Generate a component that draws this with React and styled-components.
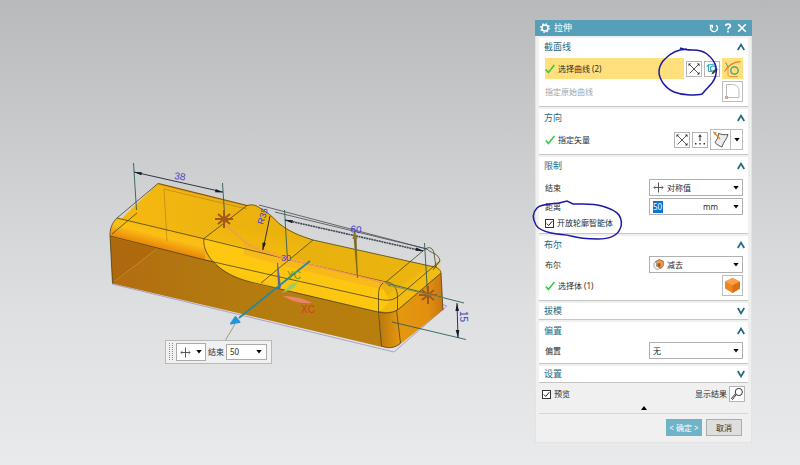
import React from "react";
import styled, { createGlobalStyle } from "styled-components";

const GlobalStyle = createGlobalStyle`
  *, *::before, *::after {
    box-sizing: border-box;
  }
  body {
    margin: 0;
    font-family: "Noto Sans", "Noto Sans CJK SC", sans-serif;
    font-size: 8px;
    line-height: 12px;
    color: #2b2b2b;
  }
  button, input, select {
    font: inherit;
    color: inherit;
    margin: 0;
    padding: 0;
    border-radius: 0;
  }
  svg {
    display: block;
  }
`;

const App = () => {
  return (
    <Desktop>
      <GlobalStyle />
      <Model />
      <QuickBar />
      <ExtrudeDialog />
    </Desktop>
  );
};

const ExtrudeDialog = () => {
  return (
    <Dialog aria-label="拉伸">
      <TitleBar>
        <GearIcon />
        <Title>拉伸</Title>
        <TitleButton aria-label="重置">
          <svg width="10" height="10" viewBox="0 0 10 10" fill="none" stroke="#fff" strokeWidth="1.4">
            <path d="M2.400 2.800A3.500 3.500 0 1 0 7.200 2.400" />
            <path d="M.6 2.400h2.800v2.800" strokeWidth="1.2" />
          </svg>
        </TitleButton>
        <TitleButton aria-label="帮助">
          <svg width="10" height="10" viewBox="0 0 10 10" fill="none" stroke="#fff" strokeWidth="1.7">
            <path d="M2.600 2.900C2.800.4 7.400.4 7.400 2.900 7.400 4.500 5 4.400 5 6.600M5 7.800v1.700" />
          </svg>
        </TitleButton>
        <TitleButton aria-label="关闭">
          <svg width="10" height="10" viewBox="0 0 10 10" stroke="#fff" strokeWidth="1.6">
            <path d="M1.200 1.200l7.600 7.600M8.800 1.200L1.200 8.800" />
          </svg>
        </TitleButton>
      </TitleBar>

      <Sections>
        <Section title="截面线">
          <Row>
            <Highlight>
              <CheckIcon />
              选择曲线 (2)
            </Highlight>
            <ToolButton aria-label="反向">
              <ReverseIcon />
            </ToolButton>
            <ToolButton aria-label="绘制截面">
              <SketchIcon />
            </ToolButton>
            <LargeButton $active aria-label="曲线">
              <CurveIcon />
            </LargeButton>
          </Row>
          <Row>
            <Label $muted>指定原始曲线</Label>
            <LargeButton aria-label="指定原始曲线" disabled>
              <OriginIcon />
            </LargeButton>
          </Row>
        </Section>

        <Section title="方向">
          <Row>
            <Label>
              <CheckIcon />
              指定矢量
            </Label>
            <ToolButton aria-label="反向">
              <ReverseIcon />
            </ToolButton>
            <ToolButton aria-label="矢量对话框">
              <svg width="14" height="14" viewBox="0 0 14 14" fill="#333">
                <path d="M6.500 3h1v5h-1zM7 1.200l1.800 2.600H5.200zM2 10h1.500v1.500H2zM6.250 10h1.500v1.500h-1.500zM10.500 10H12v1.500h-1.500z" />
              </svg>
            </ToolButton>
            <SplitButton>
              <LargeButton aria-label="面法向">
                <SurfaceIcon />
              </LargeButton>
              <DropButton aria-label="更多矢量">
                <Caret />
              </DropButton>
            </SplitButton>
          </Row>
        </Section>

        <Section title="限制" roomy>
          <Row>
            <Label as="label" htmlFor="limit-end">
              结束
            </Label>
            <SelectField id="limit-end" value="对称值" icon={<SymmetricIcon />} />
          </Row>
          <Row>
            <Label as="label" htmlFor="distance">
              距离
            </Label>
            <Field>
              <DistanceInput id="distance" defaultValue="50" />
              <Unit>mm</Unit>
              <Caret />
            </Field>
          </Row>
          <Row>
            <Checkbox label="开放轮廓智能体" />
          </Row>
        </Section>

        <Section title="布尔">
          <Row>
            <Label as="label" htmlFor="boolean">
              布尔
            </Label>
            <SelectField id="boolean" value="减去" icon={<SubtractIcon />} />
          </Row>
          <Row>
            <Label>
              <CheckIcon />
              选择体 (1)
            </Label>
            <LargeButton aria-label="选择体">
              <CubeIcon />
            </LargeButton>
          </Row>
        </Section>

        <Section title="拔模" collapsed />

        <Section title="偏置">
          <Row>
            <Label as="label" htmlFor="offset">
              偏置
            </Label>
            <SelectField id="offset" value="无" />
          </Row>
        </Section>

        <Section title="设置" collapsed />
      </Sections>

      <Preview>
        <Checkbox label="预览" />
        <PreviewResult>
          显示结果
          <ToolButton aria-label="显示结果">
            <svg width="14" height="14" viewBox="0 0 14 14" fill="none" stroke="#333">
              <circle cx="8.8" cy="5" r="3.6" />
              <path d="M6.200 7.600L2.600 12.400 1.400 11.400 5.400 6.800" />
            </svg>
          </ToolButton>
        </PreviewResult>
      </Preview>
      <LessButton aria-label="收起">
        <svg width="6" height="4" viewBox="0 0 6 4">
          <path d="M0 4l3-4 3 4z" />
        </svg>
      </LessButton>
      <Actions>
        <ActionButton $primary>&lt; 确定 &gt;</ActionButton>
        <ActionButton>取消</ActionButton>
      </Actions>

      <PenMarks viewBox="0 0 217 423" aria-hidden="true">
        <path d="M152 29l-7 1c-8 2-12 6-17 11-3 4-4 8-4 11 0 4 2 8 4 11 3 4 6 7 11 9 5 2 10 3 16 3 5 0 9 0 12-1l10-11c3-4 5-10 4-16-1-5-3-8-9-13-4-3-9-4-14-4-5 0-9 0-13-2" />
        <path d="M1 205c-4-7-4-12 1-17 4-4 15-4 22-5l8-2 6 3c10 0 20-1 29 2 7 2 14 5 17 9 3 5 3 10 1 14-3 7-12 10-22 10-9 0-20-1-27-3-6-2-12-1-20-3C8 211 3 209 1 205z" />
      </PenMarks>
    </Dialog>
  );
};

const Section = ({ title, collapsed, roomy, children }) => {
  const [open, setOpen] = React.useState(!collapsed);

  return (
    <Panel>
      <PanelHeader
        $open={open}
        aria-expanded={open}
        onClick={() => setOpen((o) => !o)}
      >
        {title}
        <svg width="8" height="8" viewBox="0 0 8 8" fill="none" stroke="#1d687f" strokeWidth="1.7">
          <path d={open ? "M.8 7L4 1.600 7.200 7" : "M.8 1L4 6.400 7.200 1"} />
        </svg>
      </PanelHeader>
      {open && <PanelBody $roomy={roomy}>{children}</PanelBody>}
    </Panel>
  );
};

const SelectField = ({ id, value, icon }) => (
  <Field>
    {icon}
    <Select id={id} defaultValue={value}>
      <option>{value}</option>
    </Select>
    <Caret />
  </Field>
);

const Checkbox = ({ label }) => (
  <CheckLabel>
    <CheckBoxWrap>
      <CheckInput type="checkbox" defaultChecked />
      <svg width="9" height="9" viewBox="0 0 9 9" fill="none" stroke="#222">
        <path d="M1.800 4.600l1.900 1.900 3.600-4.300" />
      </svg>
    </CheckBoxWrap>
    {label}
  </CheckLabel>
);

const QuickBar = () => (
  <Toolbar>
    <svg width="6" height="18" viewBox="0 0 6 18" stroke="#8c8c8c" strokeDasharray="1 1">
      <path d="M1.500 0v18M4.500 0v18" />
    </svg>
    <QuickMode aria-label="对称值">
      <SymmetricIcon />
      <Caret />
    </QuickMode>
    <label htmlFor="quick-end">结束</label>
    <QuickField>
      <QuickInput id="quick-end" defaultValue="50" />
      <Caret />
    </QuickField>
  </Toolbar>
);

const Caret = () => (
  <CaretSvg width="6" height="4" viewBox="0 0 6 4">
    <path d="M.3 0h5.400L3 3.400z" />
  </CaretSvg>
);

const CheckIcon = () => (
  <svg width="10" height="10" viewBox="0 0 10 10" fill="none" stroke="#35c948" strokeWidth="1.6">
    <path d="M.8 5.400l2.600 3L9.400 1" />
  </svg>
);

const GearIcon = () => (
  <svg width="10" height="10" viewBox="0 0 10 10" fill="none" stroke="#fff">
    <circle cx="5" cy="5" r="3" strokeWidth="1.4" />
    <circle cx="5" cy="5" r="4.2" strokeWidth="1.4" strokeDasharray="1.6 1.7" />
  </svg>
);

const ReverseIcon = () => (
  <svg width="14" height="14" viewBox="0 0 14 14" fill="none" stroke="#444" strokeWidth=".9">
    <path d="M2.500 2.500l9 9M2.500 11.500l9-9" />
    <path d="M1.500 1.500h2.700L1.500 4.200zM12.500 1.500v2.700L9.800 1.500zM12.500 12.500H9.800l2.700-2.700z" fill="#333" stroke="none" />
  </svg>
);

const SketchIcon = () => (
  <svg width="14" height="14" viewBox="0 0 14 14" fill="none" stroke="#35a8bc">
    <path d="M3.500 2v7.500M1.500 4.500C4 2.500 7 2 10.500 2M3.500 9.500H7" strokeWidth="1.2" />
    <circle cx="8" cy="6.500" r="2.600" strokeWidth="1.200" />
    <path d="M6.500 12.500l.8-2.500 4-4 1.500 1.500-4 4z" fill="#444" stroke="none" />
  </svg>
);

const CurveIcon = () => (
  <svg width="19" height="19" viewBox="0 0 19 19" fill="none">
    <path d="M5 8.500V16a1.500 1.500 0 0 0 1.500 1.500H15" stroke="#e59a3c" />
    <path d="M1.500 12.500C5 6.400 9.600 3 17.500 2.600" stroke="#e3862c" strokeWidth="1.3" />
    <path d="M2.500 3.500l3 5" stroke="#4a9c7a" />
    <circle cx="11.500" cy="11.500" r="3.700" stroke="#2aa091" strokeWidth="1.3" />
  </svg>
);

const OriginIcon = () => (
  <svg width="19" height="19" viewBox="0 0 19 19" fill="none">
    <path d="M3.500 15.500v-13h6c4 0 6.500 2.500 6.500 6.500v6.500z" stroke="#b9bcbe" />
    <path d="M2 14h3v3H2z" fill="#d3a595" />
  </svg>
);

const SurfaceIcon = () => (
  <svg width="19" height="19" viewBox="0 0 19 19" fill="none">
    <path d="M7.500 3.500c3 1 5.500 1.500 9.500 1-1 4.500-4.500 7-6 12.500-2-.5-4.500-2-7-4.500 1.500-2.500 3.500-4.500 3.500-9z" fill="#ececec" stroke="#555" />
    <path d="M9 9L3.500 3" stroke="#e8882f" strokeWidth="1.4" />
    <path d="M2 1.500l3.600.9-2.400 2.500z" fill="#e8882f" />
  </svg>
);

const SymmetricIcon = () => (
  <svg width="11" height="11" viewBox="0 0 11 11" fill="none" stroke="#555">
    <path d="M5.500.5v10M.8 5.500h9.400" />
    <path d="M2.400 4L.8 5.500 2.400 7M8.600 4l1.600 1.500L8.600 7" strokeWidth=".8" />
  </svg>
);

const SubtractIcon = () => (
  <svg width="11" height="11" viewBox="0 0 11 11">
    <path d="M2.500 2.500L6 .6l4.300 1.600v4.500L8 9.500 3 7z" fill="#ef9a55" stroke="#9c5a26" strokeWidth=".8" />
    <path d="M.8 5.500c0-1.500 1-2.300 2.700-2.300v4L6.800 9c-.8 1.200-2 1.500-3.300 1.200C1.600 9.700.8 8 .8 5.500z" fill="#f6f3ef" stroke="#888" strokeWidth=".7" />
    <path d="M4.500 4.500l3-.5v4.300l-3-1.300z" fill="#a3561f" />
  </svg>
);

const CubeIcon = () => (
  <svg width="19" height="19" viewBox="0 0 19 19">
    <path d="M9.500 2L17 5.600v7L9.500 17 2 12.600v-7z" fill="#ef8424" />
    <path d="M9.500 2L17 5.600 9.500 9.500 2 5.600z" fill="#fca147" />
    <path d="M9.500 9.500L17 5.600v7L9.500 17z" fill="#dc6f14" />
  </svg>
);

const Star = ({ x, y }) => (
  <path
    d={`M${x - 9} ${y}h18M${x} ${y - 9}v18M${x - 6} ${y - 5}l12 10M${x + 6} ${y - 5}l-12 10`}
    stroke="#a05a1c"
    strokeWidth="2"
  />
);

// Block with its sketch dimensions, in canvas units
const Model = () => (
  <ModelSvg width="380" height="205" viewBox="100 155 380 205" fill="none">
    <defs>
      <linearGradient id="top" x1="0" y1="0" x2="1" y2="0">
        <stop offset="0" stopColor="#f6b910" />
        <stop offset=".5" stopColor="#e8b00e" />
        <stop offset="1" stopColor="#edb50f" />
      </linearGradient>
      <linearGradient id="round" x1="155" y1="224" x2="149" y2="248" gradientUnits="userSpaceOnUse">
        <stop offset="0" stopColor="#f5b90f" />
        <stop offset=".4" stopColor="#fcc015" />
        <stop offset=".85" stopColor="#ec8d0b" />
        <stop offset="1" stopColor="#cc7b0b" />
      </linearGradient>
      <linearGradient id="front" x1="110" y1="0" x2="400" y2="0" gradientUnits="userSpaceOnUse">
        <stop offset="0" stopColor="#b26d10" />
        <stop offset=".4" stopColor="#b37a10" />
        <stop offset="1" stopColor="#b9800e" />
      </linearGradient>
      <linearGradient id="side" x1="395" y1="0" x2="442" y2="0" gradientUnits="userSpaceOnUse">
        <stop offset="0" stopColor="#e4990f" />
        <stop offset=".7" stopColor="#e2900f" />
        <stop offset="1" stopColor="#c97812" />
      </linearGradient>
      <linearGradient id="corner" x1="379" y1="0" x2="400" y2="0" gradientUnits="userSpaceOnUse">
        <stop offset="0" stopColor="#b9780d" />
        <stop offset="1" stopColor="#e7980c" />
      </linearGradient>
      <linearGradient id="bend" x1="230" y1="225" x2="222" y2="268" gradientUnits="userSpaceOnUse">
        <stop offset="0" stopColor="#ecb30e" />
        <stop offset="1" stopColor="#ffcb14" />
      </linearGradient>
    </defs>

    <path d="M112 284L394 352l53-46-6-2" stroke="#a9a2c4" />
    <path d="M110 235l95 18 80 35 94 24 3 35L112.500 283.500z" fill="url(#front)" />
    <path d="M110 236l2.500 47.500L167 241z" fill="#a9620c" opacity=".45" />
    <path d="M115 281l52-40" stroke="#cf9d4e" opacity=".6" />
    <path
      d="M158 183.500l89 22c5-1 8-1 12 2 9 5 12 8 20 16 10 8 20 12 34 16.500l123 27.300c4 2 5 4 5 6l-41 35c-7 5-13 6-22 3.700l-98-23.500-70-28-95-23c0-8 1-13 7-19.500z"
      fill="url(#top)"
    />
    <path d="M117 218l88 21v21l-95-23c0-8 2-14 7-19z" fill="url(#round)" />
    <path d="M204 238l43-33c6-1 9 0 12 2 9 5 12 8 20 16 10 8 20 12 34 16.500l-52 44c-24-5-42-14-50-24-5-7-8-14-7-21.500z" fill="url(#bend)" opacity=".75" />
    <path d="M204 238l91 21 84 23 11 19-10 11-99-23c-32-5-54-13-65-25-8-9-12-16-12-26z" fill="#ffc912" opacity=".85" />
    <path d="M244 241l51 18 91 23-1 8-105-25-36-10z" fill="#efa829" opacity=".4" />
    <path d="M380 300l60-40 1 13-41 35c-7 5-14 6-21 3.700z" fill="#ffc912" opacity=".35" />
    <path d="M398 309l43-36 2 37-45 36z" fill="url(#side)" />
    <path d="M379 311c7 2 13 1 19-2l2.500 34c-5 6-13 5-19 3.500z" fill="url(#corner)" />
    <path d="M159 184l88 22" stroke="#ef9e16" strokeWidth="2" />

    <g stroke="#4d4218" strokeWidth=".8">
      <path d="M158 183.500l89 22c5-1 8-1 12 2 9 5 12 8 20 16 10 8 20 12 34 16.500l123 27.300c4 2 5 4 5 6l2 37" />
      <path d="M158 183.500L117 218c-5 5-7 10-7 17l2.500 48.500" />
      <path d="M117 218l88 21 90 22 91 21M110 236l95 24 75 17 98 22c12 3 17 0 22-4l40-34" />
      <path d="M247 205.500L204 238.500c-2 14 11 29 30 38 14 6 28 8 46 12.500l98 23c9 2 16 1 22-4l41-35" />
      <path d="M313 240l-52 43M424 250l-38 32M112 234l25-21" />
      <path d="M164 189l3 52M164 189l83 20" opacity=".35" />
      <path d="M378.500 311l3 35c7 3 14 2 19-3l-4-33" />
      <path d="M378.500 311v-16c0-8 3-13 8-13 7 0 11 7 11 15v13" />
      <path d="M424 250c6-5 9-1 10 3l2 14M427 249c3 4 12 4 13 12l-7 9" />
      <path d="M259 205l168 44M275 212l152 37" stroke="#444a50" />
    </g>

    <g stroke="#2d5d5d" strokeWidth=".9">
      <path d="M133.500 163l3 47M222.500 183l2.500 38M284.500 210l3 50M424.500 243l3 50M386 283l78 20M392 322l74 17.500" />
    </g>
    <g stroke="#1d2430" strokeWidth=".9">
      <path d="M134 172l89 20M270 216l-7 34M457 303l1 35" />
      <path d="M285 220l138 31" strokeWidth="1.600" strokeDasharray="2 .6" opacity=".8" />
    </g>
    <g fill="#141a26">
      <path d="M134 172l8 .3-.8 3zM223 192.500l-8-.3.8-3.200zM262.500 250.500l0-8 3.400.8zM457 303l2 8h-3.600zM458 338l-2.300-8h3.600z" />
      <path d="M285 220l8 .3-.8 3zM423.500 251l-8-.3.8-3.200z" />
    </g>

    <path d="M225 224c10 9 18 18 28 23 12 6 23 9 38 13l95 23" stroke="#f59a52" strokeWidth="1.300" />
    <Star x={224} y={219} />
    <Star x={428} y={295} />
    <path d="M357.500 278l-3.400-40h2z" fill="#776619" stroke="#776619" strokeWidth=".7" />
    <path d="M354.500 229l3 10h-5z" fill="#8a7a29" />
    <path d="M388 285l55 13" stroke="#8b8d44" />
    <path d="M384 282l8 1-2 4z" fill="#8a8c3d" />

    <path d="M277.500 263l3 24-2 2z" fill="#53609a" stroke="#53609a" strokeWidth=".8" />
    <path d="M310 261l-71 57" stroke="#26889f" strokeWidth="1.700" />
    <path d="M231 323.500l4.500-6.500 4 5z" fill="#2297dd" stroke="#2297dd" strokeWidth="2" strokeLinejoin="round" />
    <path d="M235 324l-10 17" stroke="#a2977f" />
    <path d="M282 293l9-9 7-2-4 6z" fill="#9dce59" />
    <path d="M283 296c10 0 20 2 29 7-11 1-21-2-29-7z" fill="#e88467" />

    <DimText x="174" y="179" transform="rotate(8 174 179)">38</DimText>
    <DimText x="350" y="232" transform="rotate(8 350 232)">60</DimText>
    <DimText x="263" y="225" transform="rotate(-72 263 225)" $small>R35</DimText>
    <DimText x="281" y="261" $small>30</DimText>
    <DimText x="460" y="311" transform="rotate(90 460 311)">15</DimText>
    <DimText x="301" y="313" $color="#d83a24">XC</DimText>
    <DimText x="287" y="279" $color="#6b9a1c">YC</DimText>
  </ModelSvg>
);

const Desktop = styled.main`
  position: relative;
  min-height: 100vh;
  overflow: hidden;
  background: linear-gradient(#b8b9bb, #cccdcf 33%, #dedfe1 66%, #e9eaec);
`;

const ModelSvg = styled.svg`
  position: absolute;
  left: 100px;
  top: 155px;
`;

const DimText = styled.text`
  font-family: "Liberation Sans", sans-serif;
  font-size: ${(p) => (p.$small ? 9 : 10)}px;
  fill: ${(p) => p.$color || "#4743c4"};
`;

const Toolbar = styled.div`
  position: absolute;
  left: 165px;
  top: 340px;
  display: flex;
  align-items: center;
  gap: 2px;
  padding: 2px 4px 2px 2px;
  background: #f1f1f1;
  border: 1px solid #b9b9b9;
`;

const QuickMode = styled.button`
  display: flex;
  align-items: center;
  justify-content: space-between;
  width: 30px;
  height: 18px;
  padding: 0 3px;
  background: #fff;
  border: 1px solid #aaa;
`;

const QuickField = styled.div`
  display: flex;
  align-items: center;
  width: 41px;
  height: 16px;
  padding: 0 4px 0 3px;
  background: #fff;
  border: 1px solid #aaa;
`;

const QuickInput = styled.input`
  flex: 1;
  min-width: 0;
  height: 12px;
  border: none;
  background: transparent;
`;

const Dialog = styled.section`
  position: absolute;
  top: 20px;
  right: 48px;
  width: 217px;
  background: #f0f0f0;
  border: 1px solid #e2e3e4;
  border-top: none;
`;

const TitleBar = styled.header`
  display: flex;
  align-items: center;
  gap: 4px;
  height: 16px;
  margin: 0 -1px;
  padding: 0 5px;
  background: #559fb8;
  color: #fff;
`;

const Title = styled.h1`
  flex: 1;
  margin: 0;
  font-size: 9px;
  font-weight: 400;
`;

const TitleButton = styled.button`
  border: none;
  background: transparent;
`;

const Sections = styled.div`
  display: flex;
  flex-direction: column;
  gap: 2px;
  padding: 2px 3px;
`;

const Panel = styled.section`
  background: #fff;
  border-bottom: 1px solid #c6c6c6;
`;

const PanelHeader = styled.button`
  display: flex;
  align-items: center;
  justify-content: space-between;
  width: 100%;
  height: ${(p) => (p.$open ? 17 : 16)}px;
  padding: 0 3px 0 5px;
  border: none;
  background: transparent;
  color: #1d687f;
  font-size: 9px;
`;

const PanelBody = styled.div`
  display: flex;
  flex-direction: column;
  gap: 2px;
  padding: ${(p) => (p.$roomy ? 5 : 3)}px 5px 4px 6px;
`;

const Row = styled.div`
  display: flex;
  align-items: center;
  gap: 2px;
`;

const Label = styled.span`
  flex: 1;
  display: flex;
  align-items: center;
  gap: 3px;
  color: ${(p) => (p.$muted ? "#a3a3a3" : "inherit")};
`;

const Highlight = styled(Label)`
  height: 21px;
  background: #ffe07c;
`;

const ToolButton = styled.button`
  display: grid;
  place-items: center;
  width: 16px;
  height: 16px;
  background: #fff;
  border: 1px solid #b4b4b4;
`;

const LargeButton = styled.button`
  display: grid;
  place-items: center;
  width: 21px;
  height: 21px;
  background: ${(p) => (p.$active ? "#ffe07c" : "#fff")};
  border: 1px solid ${(p) => (p.$active ? "#ffe07c" : "#bdbdbd")};
`;

const SplitButton = styled.div`
  display: flex;
`;

const DropButton = styled.button`
  display: grid;
  place-items: center;
  width: 12px;
  background: #fff;
  border: 1px solid #bdbdbd;
  border-left: none;
`;

const CaretSvg = styled.svg`
  flex: none;
`;

const Field = styled.div`
  display: flex;
  align-items: center;
  gap: 3px;
  width: 94px;
  height: 17px;
  padding: 0 3px;
  background: #fff;
  border: 1px solid #b0b0b0;
`;

const Select = styled.select`
  flex: 1;
  min-width: 0;
  appearance: none;
  border: none;
  background: transparent;
`;

const DistanceInput = styled.input`
  width: 10px;
  height: 12px;
  border: none;
  background: #0f74cc;
  color: #fff;
`;

const Unit = styled.span`
  margin-left: auto;
  padding-right: 12px;
`;

const CheckLabel = styled.label`
  display: flex;
  align-items: center;
  gap: 3px;
`;

const CheckBoxWrap = styled.span`
  display: grid;
  & > * {
    grid-area: 1 / 1;
  }
  & > svg {
    pointer-events: none;
  }
  & > input:not(:checked) + svg {
    visibility: hidden;
  }
`;

const CheckInput = styled.input`
  appearance: none;
  width: 9px;
  height: 9px;
  border: 1px solid #333;
  background: #fff;
`;

const Preview = styled.div`
  display: flex;
  align-items: center;
  justify-content: space-between;
  padding: 1px 6px 0;
`;

const PreviewResult = styled.div`
  display: flex;
  align-items: center;
  gap: 2px;
`;

const LessButton = styled.button`
  display: grid;
  place-items: center;
  width: calc(100% - 6px);
  height: 12px;
  margin: 0 3px;
  border: none;
  border-bottom: 1px solid #d6d6d6;
  background: transparent;
`;

const Actions = styled.footer`
  display: flex;
  justify-content: flex-end;
  gap: 4px;
  padding: 5px 9px 6px;
`;

const ActionButton = styled.button`
  width: 36px;
  height: 17px;
  background: ${(p) => (p.$primary ? "#6fb3c8" : "#dedede")};
  border: 1px solid ${(p) => (p.$primary ? "#6fb3c8" : "#adadad")};
  color: ${(p) => (p.$primary ? "#fff" : "inherit")};
  white-space: nowrap;
`;

const PenMarks = styled.svg`
  position: absolute;
  top: 0;
  left: -1px;
  width: 217px;
  height: 423px;
  overflow: visible;
  pointer-events: none;
  fill: none;
  stroke: #1a1aa6;
  stroke-width: 1.5;
`;

export default App;
